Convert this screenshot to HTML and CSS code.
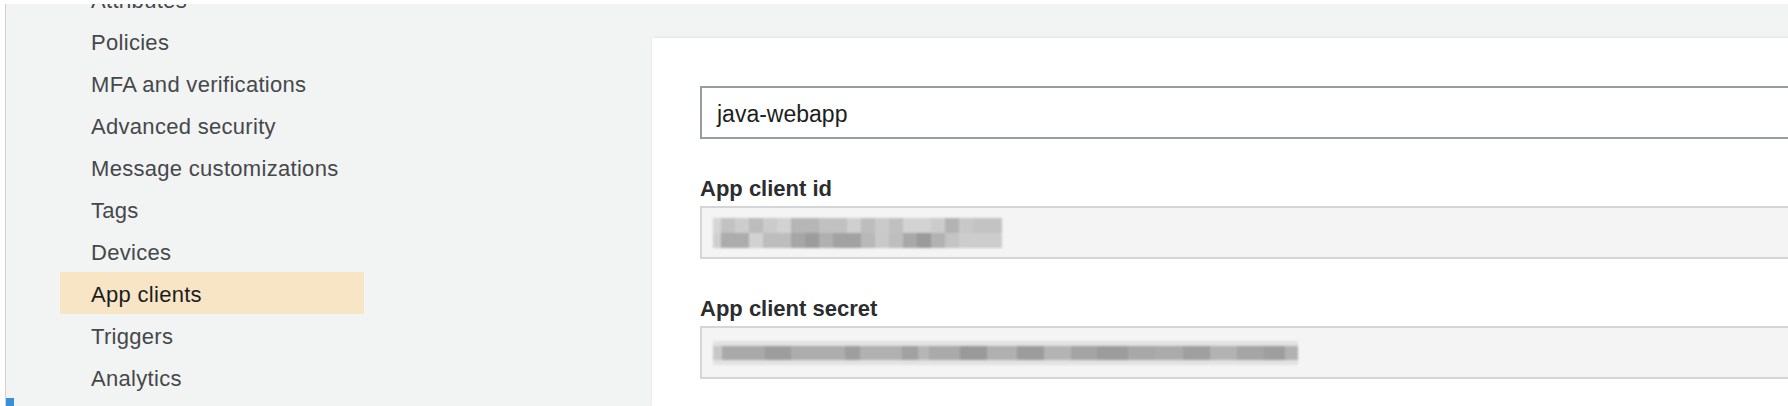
FILE: index.html
```html
<!DOCTYPE html>
<html lang="en">
<head>
<meta charset="utf-8">
<title>App clients</title>
<link rel="stylesheet" href="styles.css">
</head>
<body>
<div class="frame">
  <aside class="sidebar">
    <ul class="nav">
      <li class="nav-item">Attributes</li>
      <li class="nav-item">Policies</li>
      <li class="nav-item">MFA and verifications</li>
      <li class="nav-item">Advanced security</li>
      <li class="nav-item">Message customizations</li>
      <li class="nav-item">Tags</li>
      <li class="nav-item">Devices</li>
      <li class="nav-item active">App clients</li>
      <li class="nav-item">Triggers</li>
      <li class="nav-item">Analytics</li>
    </ul>
    <div class="blue-tab"></div>
  </aside>
  <main class="card">
    <div class="field">
      <div class="input editable">java-webapp</div>
    </div>
    <div class="field">
      <label class="label">App client id</label>
      <div class="input readonly">
        <div class="mosaic mosaic-id">
          <div class="row id-top"></div>
          <div class="row id-bottom"></div>
        </div>
      </div>
    </div>
    <div class="field">
      <label class="label">App client secret</label>
      <div class="input readonly">
        <div class="mosaic mosaic-secret">
          <div class="row secret-band"></div>
        </div>
      </div>
    </div>
  </main>
</div>
</body>
</html>
```
FILE: styles.css
```css
* { box-sizing: border-box; }

html, body {
  margin: 0;
  padding: 0;
  background: #ffffff;
  overflow: hidden;
  font-family: "Liberation Sans", Arial, Helvetica, sans-serif;
}

.frame {
  margin: 4px 0 0 5px;
  height: 402px;
  border-left: 1px solid #cfd1d2;
  background: #f2f3f3;
  display: flex;
  overflow: hidden;
}

.sidebar {
  flex: 0 0 646px;
  display: flex;
  flex-direction: column;
}

.nav {
  list-style: none;
  margin: -26px 0 0 54px;
  padding: 0;
  width: 304px;
}

.nav-item {
  height: 42px;
  padding: 3px 0 0 31px;
  line-height: 39px;
  font-size: 22px;
  letter-spacing: 0.3px;
  color: #45484b;
  white-space: nowrap;
}

.nav-item.active {
  background: #f8e5c6;
  color: #1b1d1f;
}

.blue-tab {
  width: 8px;
  height: 8px;
  background: #3a8fd8;
}

.card {
  flex: 0 0 1300px;
  margin-top: 34px;
  background: #ffffff;
  box-shadow: 0 -1px 3px rgba(0, 0, 0, 0.06);
  padding: 48px 0 0 48px;
  display: flex;
  flex-direction: column;
  gap: 37px;
}

.field {
  display: flex;
  flex-direction: column;
}

.label {
  font-size: 22px;
  font-weight: bold;
  line-height: 26px;
  color: #2b2d2f;
  margin-bottom: 4px;
}

.input {
  height: 53px;
  border: 2px solid #d3d5d6;
  display: flex;
  align-items: center;
}

.input.editable {
  border-color: #969c9f;
  background: #ffffff;
  padding: 3px 0 0 15px;
  font-size: 23px;
  color: #1c1e20;
}

.input.readonly {
  background: #f4f4f4;
  padding-left: 11px;
}

.mosaic {
  display: flex;
  flex-direction: column;
  filter: blur(1px);
}

.mosaic-id {
  width: 289px;
  height: 30px;
}

.row { flex: 1; }

.id-top {
  background: linear-gradient(to right,
    #d6d6d6 0 8px, #c2c2c2 8px 22px, #cdcdcd 22px 36px, #bcbcbc 36px 50px,
    #cbcbcb 50px 64px, #d2d2d2 64px 78px, #b6b6b6 78px 106px, #c1c1c1 106px 134px,
    #cfcfcf 134px 148px, #bdbdbd 148px 162px, #cacaca 162px 176px, #c0c0c0 176px 190px,
    #d3d3d3 190px 218px, #cccccc 218px 232px, #b3b3b3 232px 246px, #c8c8c8 246px 260px,
    #c3c3c3 260px 289px);
}

.id-bottom {
  background: linear-gradient(to right,
    #cfcfcf 0 8px, #acacac 8px 36px, #d2d2d2 36px 50px, #bdbdbd 50px 78px,
    #a6a6a6 78px 92px, #9c9c9c 92px 106px, #b0b0b0 106px 120px, #a2a2a2 120px 148px,
    #b8b8b8 148px 162px, #c9c9c9 162px 176px, #bebebe 176px 190px, #a8a8a8 190px 204px,
    #9a9a9a 204px 218px, #b2b2b2 218px 232px, #c4c4c4 232px 246px, #cdcdcd 246px 289px);
}

.mosaic-secret {
  width: 585px;
  height: 24px;
  background: #e2e2e2;
  justify-content: center;
}

.secret-band {
  flex: 0 0 14px;
  background: linear-gradient(to right,
    #c8c8c8 0 9px, #a9a9a9 9px 52px, #9d9d9d 52px 78px, #adadad 78px 132px,
    #9e9e9e 132px 147px, #b1b1b1 147px 189px, #a1a1a1 189px 205px, #b6b6b6 205px 216px,
    #aaaaaa 216px 247px, #999999 247px 274px, #b0b0b0 274px 304px, #9c9c9c 304px 331px,
    #b4b4b4 331px 358px, #a4a4a4 358px 384px, #9c9c9c 384px 415px, #a8a8a8 415px 442px,
    #ababab 442px 470px, #9f9f9f 470px 497px, #b3b3b3 497px 524px, #a5a5a5 524px 551px,
    #9e9e9e 551px 572px, #b2b2b2 572px 585px);
}
```
